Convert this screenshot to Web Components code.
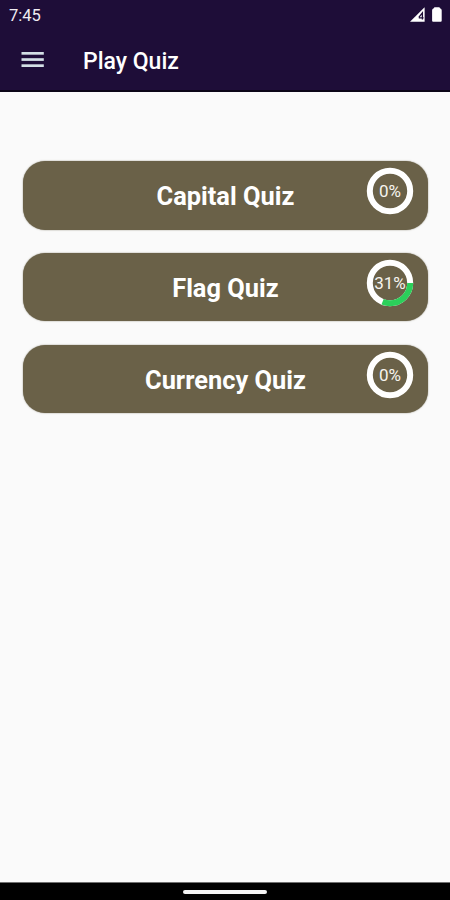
<!DOCTYPE html>
<html lang="en">
<head>
<meta charset="utf-8">
<title>Play Quiz</title>
<style>
  html, body {
    margin: 0;
    height: 100%;
  }
  body {
    font-family: Roboto, "Liberation Sans", sans-serif;
    color: #fff;
    background: #fafafa;
    overflow: hidden;
  }
</style>
</head>
<body>
<quiz-app>
  <status-bar slot="top">7:45</status-bar>
  <app-bar slot="top">Play Quiz</app-bar>
  <quiz-card percent="0">Capital Quiz</quiz-card>
  <quiz-card percent="31">Flag Quiz</quiz-card>
  <quiz-card percent="0">Currency Quiz</quiz-card>
  <nav-bar slot="bottom"></nav-bar>
</quiz-app>

<script>
class QuizApp extends HTMLElement {
  constructor() {
    super();
    this.attachShadow({ mode: "open" }).innerHTML = `
      <style>
        :host {
          display: flex;
          flex-direction: column;
          height: 100vh;
        }
        header {
          box-sizing: border-box;
          height: 92px;
          background: #1e0d38;
          border-bottom: 2px solid #0c0618;
        }
        main {
          flex: 1;
          display: flex;
          flex-direction: column;
          gap: 23.3px;
          padding: 69px 22.5px 0 23.4px;
        }
      </style>
      <header><slot name="top"></slot></header>
      <main><slot></slot></main>
      <slot name="bottom"></slot>
    `;
  }
}

class StatusBar extends HTMLElement {
  constructor() {
    super();
    this.attachShadow({ mode: "open" }).innerHTML = `
      <style>
        :host {
          display: flex;
          align-items: center;
          justify-content: space-between;
          height: 30px;
          padding: 0 7px 0 9px;
          font-size: 16.5px;
          color: #f0ecf2;
        }
        svg { display: block; }
      </style>
      <span><slot></slot></span>
      <svg width="33" height="18" viewBox="0 0 33 18">
        <path d="M0 15.8 L14.6 1.2 V15.8 Z" fill="#fff"/>
        <path d="M8.8 11.4 L12.4 6.8 V13.6 M8.8 11.8 H13.6" stroke="#1e0d38" stroke-width="1.3" fill="none"/>
        <path d="M24.8 1.2 h4.2 q0.8 0 1 1 q1.7 0.4 1.7 2 v10.6 q0 1 -1 1 h-7.6 q-1 0 -1 -1 v-10.6 q0 -1.6 1.7 -2 q0.2 -1 1 -1 Z" fill="#fff"/>
      </svg>
    `;
  }
}

class AppBar extends HTMLElement {
  constructor() {
    super();
    this.attachShadow({ mode: "open" }).innerHTML = `
      <style>
        :host {
          display: flex;
          align-items: center;
          gap: 39px;
          height: 60px;
          padding-left: 21px;
        }
        svg { display: block; }
        .title {
          font-size: 23px;
          font-weight: 500;
          line-height: 28px;
          padding-top: 3px;
        }
      </style>
      <svg width="23" height="18" viewBox="0 0 23 18" fill="#d3dfe5">
        <rect x="0.5" y="1" width="22.3" height="2.7"/>
        <rect x="0.5" y="7.2" width="22.3" height="2.7"/>
        <rect x="0.5" y="13.3" width="22.3" height="2.7"/>
      </svg>
      <div class="title"><slot></slot></div>
    `;
  }
}

class ProgressRing extends HTMLElement {
  connectedCallback() {
    const value = Number(this.getAttribute("value"));
    this.attachShadow({ mode: "open" }).innerHTML = `
      <style>
        :host {
          display: grid;
          place-items: center;
          width: 48px;
          height: 48px;
        }
        svg, span { grid-area: 1 / 1; }
        circle {
          fill: none;
          stroke: #fff;
          stroke-width: 6;
        }
        .value { stroke: #2bd05a; }
        span {
          font-size: 17px;
          line-height: 20px;
          color: #f6f4ee;
        }
      </style>
      <svg width="48" height="48" viewBox="0 0 48 48">
        <circle cx="24" cy="24" r="20.2"/>
        ${value ? `<circle class="value" cx="24" cy="24" r="20.2" pathLength="100" stroke-dasharray="${value} 100"/>` : ""}
      </svg>
      <span>${value}%</span>
    `;
  }
}

class QuizCard extends HTMLElement {
  connectedCallback() {
    this.attachShadow({ mode: "open" }).innerHTML = `
      <style>
        :host {
          position: relative;
          display: flex;
          align-items: center;
          justify-content: center;
          box-sizing: border-box;
          height: 68.5px;
          padding-top: 2px;
          border-radius: 22px;
          background: #6a6148;
          box-shadow: 0 0 1.5px rgba(70, 62, 35, 0.7);
          font-size: 25.4px;
          font-weight: 700;
        }
        progress-ring {
          position: absolute;
          top: 6.2px;
          right: 13.5px;
          font-weight: 400;
        }
      </style>
      <span><slot></slot></span>
      <progress-ring value="${this.getAttribute("percent")}"></progress-ring>
    `;
  }
}

class NavBar extends HTMLElement {
  constructor() {
    super();
    this.attachShadow({ mode: "open" }).innerHTML = `
      <style>
        :host {
          display: flex;
          justify-content: center;
          box-sizing: border-box;
          height: 18px;
          padding-top: 7px;
          background: #000;
          border-top: 1px solid #707070;
        }
        .handle {
          width: 84px;
          height: 4px;
          border-radius: 2px;
          background: #f4f4f4;
        }
      </style>
      <div class="handle"></div>
    `;
  }
}

customElements.define("quiz-app", QuizApp);
customElements.define("status-bar", StatusBar);
customElements.define("app-bar", AppBar);
customElements.define("progress-ring", ProgressRing);
customElements.define("quiz-card", QuizCard);
customElements.define("nav-bar", NavBar);
</script>
</body>
</html>
